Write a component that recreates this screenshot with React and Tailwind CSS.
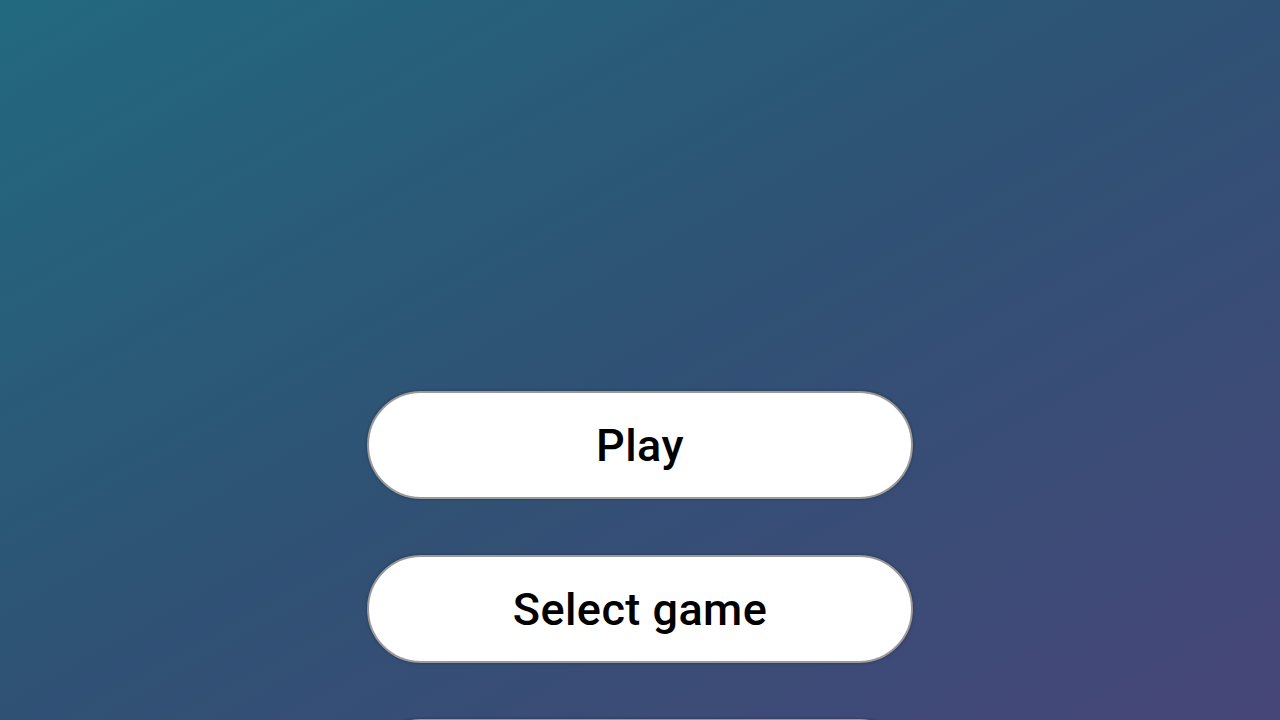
import React from "react";

const MenuButton = ({ label }) => (
  <button className="w-[546px] h-[108px] shrink-0 rounded-full bg-white border-2 border-[#9a9a9a] shadow-[0_0_3px_rgba(0,0,0,0.35)] text-black text-[45px] tracking-[0.01em] font-medium font-['Roboto',sans-serif] leading-none">
    {label}
  </button>
);

const App = () => {
  return (
    <div className="h-screen w-full overflow-hidden bg-[linear-gradient(to_bottom_right,#22697f,#2f5174_50%,#474679)] flex flex-col items-center pt-[391px] gap-[56px]">
      <MenuButton label="Play" />
      <MenuButton label="Select game" />
      <MenuButton label="Settings" />
    </div>
  );
};

export default App;
